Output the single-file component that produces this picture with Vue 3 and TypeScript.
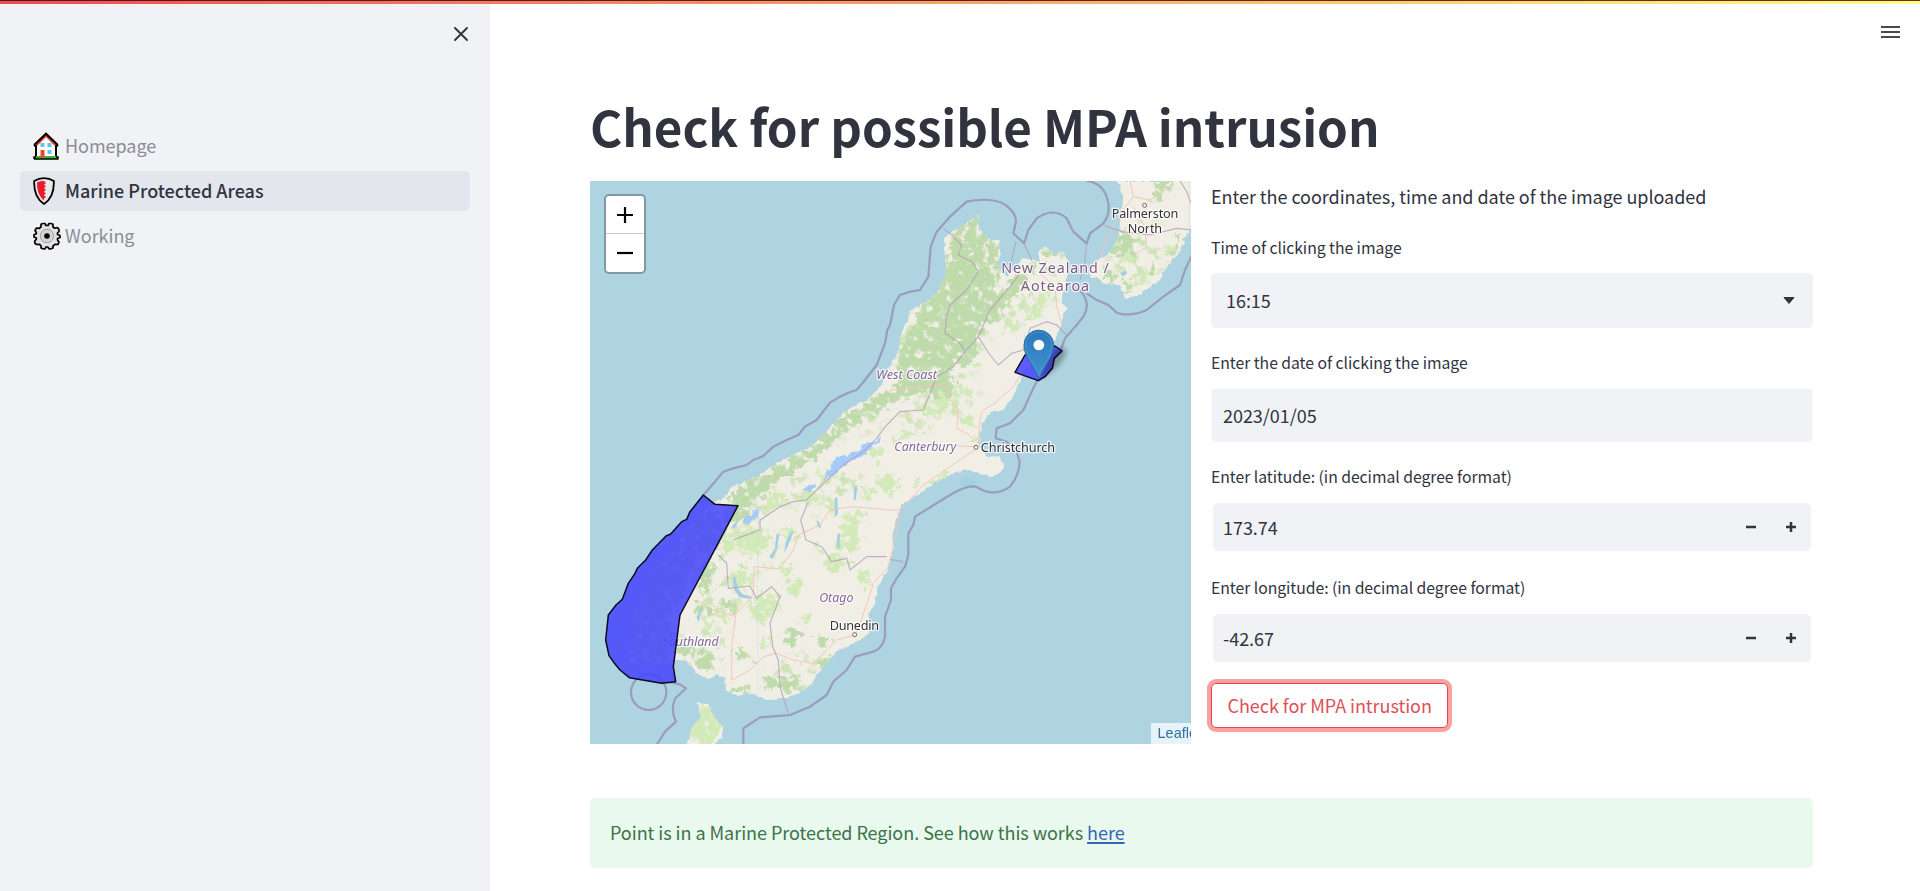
<script setup lang="ts">
import { ref } from 'vue'

interface NavItem {
  label: string
  icon: 'house' | 'shield' | 'gear'
}

const navItems: NavItem[] = [
  { label: 'Homepage', icon: 'house' },
  { label: 'Marine Protected Areas', icon: 'shield' },
  { label: 'Working', icon: 'gear' },
]
const activeNav = ref<string>('Marine Protected Areas')
const time = ref<string>('16:15')
const date = ref<string>('2023/01/05')
const latitude = ref<number>(173.74)
const longitude = ref<number>(-42.67)

const step = (value: number, delta: number): number => Number((value + delta).toFixed(2))

// Map drawing units are thirds of a pixel.
const southIsland =
  'M1168 105 L1140 122 1098 147 1062 175 1066 230 1068 280 1045 335 1010 365 985 382 957 392 955 412 935 460 926 512 900 560 872 620 830 660 770 690 740 722 700 765 660 800 600 830 560 850 500 890 440 915 425 920 410 945 380 965 320 1010 200 1170 130 1320 120 1440 160 1460 250 1440 290 1442 320 1480 350 1497 382 1482 405 1495 408 1530 440 1548 480 1540 530 1560 580 1556 620 1540 662 1518 682 1480 740 1415 800 1384 840 1358 836 1305 855 1270 862 1225 900 1150 908 1100 908 1060 920 1010 935 975 980 945 1050 900 1100 875 1140 870 1185 886 1210 888 1235 875 1242 855 1228 828 1195 832 1168 800 1168 770 1175 730 1200 700 1240 690 1270 650 1285 610 1298 580 1350 530 1395 480 1412 440 1420 405 1433 385 1415 370 1418 340 1428 300 1440 258 1420 215 1395 222 1362 198 1342 218 1352 245 1300 235 1275 262 1252 292 1225 268 1230 220 1226 180 1198 178 1175 155 1162 130 Z'
const northIsland =
  'M1580 3 L1592 24 1600 52 1595 90 1592 145 1580 182 1552 225 1520 240 1498 265 1500 290 1520 294 1545 312 1590 316 1605 356 1640 347 1700 310 1732 260 1770 212 1792 162 1806 138 1806 3 Z'
const stewartIsland =
  'M320 1570 L355 1573 372 1612 400 1640 394 1672 372 1695 293 1695 306 1642 332 1610 Z'

// [cx, cy, rx, ry, rotation]
const forests: number[][] = [
  [1130, 200, 50, 70, -10], [1160, 170, 30, 55, 0], [1110, 300, 55, 85, 8], [1180, 290, 48, 80, 10],
  [1050, 405, 75, 60, -20], [1130, 400, 60, 100, 10], [1010, 480, 70, 60, -30], [1100, 500, 65, 60, -30],
  [960, 530, 40, 80, 20], [1020, 575, 80, 45, -35], [1195, 380, 45, 50, 0], [1210, 205, 18, 28, 0],
  [1280, 320, 40, 28, -40], [1230, 370, 36, 26, -50], [960, 620, 50, 30, -35], [1060, 620, 35, 26, -30],
  [870, 670, 70, 24, -35], [780, 725, 70, 22, -35], [700, 790, 55, 20, -35], [640, 835, 60, 20, -30],
  [560, 885, 70, 24, -28], [480, 935, 65, 30, -28], [445, 1000, 45, 26, -30], [350, 1190, 20, 60, 5],
  [340, 1290, 28, 18, 0], [410, 1275, 24, 15, 10], [345, 1445, 28, 30, 0], [290, 1410, 28, 24, 0],
  [600, 1510, 36, 26, 0], [545, 1505, 24, 16, 0], [605, 1370, 16, 30, 30], [700, 1378, 20, 16, 0],
  [460, 1420, 28, 14, 30], [1600, 190, 38, 40, 15], [1560, 285, 22, 20, 0], [1720, 22, 18, 38, 35],
  [1760, 200, 8, 36, 30], [1690, 265, 8, 22, 30], [1612, 320, 12, 20, 0], [1365, 172, 12, 24, 10],
  [1380, 225, 22, 13, 0], [1310, 270, 36, 16, -30], [450, 1530, 34, 9, 0], [700, 1445, 26, 12, -40],
  [230, 1200, 60, 170, 28], [180, 1370, 70, 90, 0], [340, 1060, 50, 70, 30],
]
const meadows: number[][] = [
  [1260, 440, 28, 14, -20], [1330, 400, 26, 14, -20], [1310, 480, 20, 9, 30], [1340, 370, 34, 18, -20],
  [1060, 660, 45, 30, -20], [1010, 690, 18, 20, 0], [1130, 720, 24, 14, 30], [1115, 620, 24, 9, 0],
  [940, 770, 45, 12, -20], [1010, 750, 18, 10, 0], [855, 820, 22, 24, -40], [890, 910, 36, 28, 20],
  [700, 880, 20, 14, 0], [840, 940, 22, 16, 0], [780, 1070, 36, 50, 0], [740, 1150, 36, 24, 0],
  [660, 950, 30, 24, -20], [800, 1010, 28, 18, 0], [710, 980, 22, 14, 20], [480, 1080, 60, 38, 0],
  [560, 960, 28, 26, -30], [430, 1080, 35, 35, 0], [450, 1200, 34, 28, 0], [530, 1270, 38, 36, 0],
  [510, 1300, 36, 22, 20], [615, 1222, 22, 30, -20], [680, 1105, 16, 12, 0], [590, 1170, 20, 14, 0],
  [830, 1200, 12, 28, 0], [350, 1330, 12, 26, 0], [400, 1310, 16, 10, 0],
  [640, 1320, 12, 16, 30], [530, 1390, 12, 14, 0], [345, 1640, 50, 62, 0], [1050, 900, 42, 9, -25],
  [990, 915, 22, 7, 0], [1620, 230, 26, 18, -30], [1650, 300, 28, 16, -35], [1730, 210, 12, 26, 30],
  [1060, 480, 16, 10, 0], [1700, 55, 12, 20, 30], [1380, 340, 22, 14, 30], [1160, 780, 12, 6, 0],
  [600, 1060, 24, 18, 0], [1160, 560, 16, 10, 30], [1130, 640, 18, 10, 0],
]
// Broad, thin vegetation that only shows as scattered specks.
const scrub: number[][] = [
  [840, 710, 110, 40, -35], [540, 950, 130, 50, -35], [460, 1110, 110, 80, 0], [390, 1230, 70, 90, 0],
  [340, 1400, 80, 70, 0], [620, 1480, 100, 60, 0], [1300, 370, 110, 50, -35], [1050, 680, 130, 50, -20],
  [1400, 260, 60, 70, 0], [1060, 430, 150, 220, 20], [1650, 220, 100, 100, 0], [720, 930, 120, 60, -30],
]

const southernArea =
  '340,945 375,973 444,977 270,1305 250,1460 257,1505 215,1510 180,1504 118,1493 90,1470 72,1448 57,1427 47,1380 55,1305 78,1275 97,1258 115,1210 135,1180 142,1165 167,1140 187,1110 228,1068 242,1062 275,1025 290,1018 300,995'
const kaikouraArea =
  '1305,525 1275,577 1345,602 1365,590 1387,565 1393,535 1416,513 1395,498'
</script>

<template>
  <div class="app">
    <div class="decoration"></div>

    <aside class="sidebar">
      <button class="close" aria-label="Close sidebar">
        <svg viewBox="0 0 16 16" width="16" height="16">
          <path d="M2 2 14 14M14 2 2 14" />
        </svg>
      </button>
      <nav class="nav">
        <a
          v-for="item in navItems"
          :key="item.label"
          class="nav-item"
          :class="{ active: item.label === activeNav }"
          @click="activeNav = item.label"
        >
          <span class="nav-icon">
            <svg v-if="item.icon === 'house'" viewBox="0 0 27 28" width="27" height="28">
              <path d="M3 14V26H23V14L13 3Z" fill="#fff" />
              <path d="M2 24H24V27H2Z" fill="#3fb13f" />
              <path d="M3 24V13M23 24V13" stroke="#000" stroke-width="2" />
              <path d="M1 27V25H3M25 27V25H23M1 27H25.500" fill="none" stroke="#000" stroke-width="1.500" />
              <path d="M3.500 13 13 3.500 22.500 13" fill="none" stroke="#e8341c" stroke-width="2.200" />
              <path d="M1.700 14.500V12.500L13 1.700 24.300 12.500V14.500" fill="none" stroke="#000" stroke-width="2" />
              <path d="M7.500 11h4v4h-4zM14.500 11h4v4h-4zM14.500 18h4v4h-4z" fill="#5cc8f0" />
              <path d="M7.500 18h4v7.500h-4z" fill="#e8492c" />
            </svg>
            <svg v-else-if="item.icon === 'shield'" viewBox="0 0 27 28" width="27" height="28">
              <path d="M11 1.200C7.500 1.200 3.800 2.400 1.200 4C.8 13 2.800 21.500 11 27C19.200 21.500 21.200 13 20.800 4C18 2.200 14.500 1.200 11 1.200Z" fill="#e9e9e9" stroke="#000" stroke-width="1.800" />
              <path d="M11.500 3.800C8.500 3.800 6 4.500 4 5.500C4 13 5.500 19 11 23.500Z" fill="#ea1c2c" />
              <path d="M11.700 5V22" stroke="#ea1c2c" stroke-width="1.500" stroke-dasharray="2 1.500" />
            </svg>
            <svg v-else viewBox="0 0 28 28" width="28" height="28">
              <path d="M10 1.500H12L13 3.500H15L16 1.500H18L20 2.300V5L21.800 6.200L24.500 5.500L26 7.500V9.500L24.500 11V12.500L27 13.500V15.500L24.500 16.500V18L26 20L25 22.500L22 22.300L20 24V26L18 26.800H16L14.800 25H13L12 26.800H10L8 26V23.800L6.500 22.300L3.500 22.500L1.800 21V19L3.300 17.200V16L1 15V12.800L3.300 11.800V10.500L2 8.500L3.500 6L6.300 6.300L8 5V2.300Z" fill="#e2e2e2" stroke="#000" stroke-width="1.700" stroke-linejoin="round" />
              <circle cx="14" cy="14" r="6.700" fill="#d4d4d4" stroke="#a0a0a0" />
              <circle cx="14" cy="14" r="2.800" fill="#000" />
            </svg>
          </span>
          <span class="nav-label">{{ item.label }}</span>
        </a>
      </nav>
    </aside>

    <main class="main">
      <button class="menu" aria-label="Menu">
        <span></span><span></span><span></span>
      </button>

      <h1 class="title">Check for possible MPA intrusion</h1>

      <div class="columns">
        <section class="map">
          <svg class="tiles" viewBox="0 3 1803 1689" width="601" height="563">
            <defs>
              <clipPath id="land">
                <path :d="southIsland" />
                <path :d="northIsland" />
                <path :d="stewartIsland" />
              </clipPath>
              <filter id="rough" x="-5%" y="-5%" width="110%" height="110%">
                <feTurbulence type="fractalNoise" baseFrequency="0.045" numOctaves="4" seed="4" result="n" />
                <feDisplacementMap in="SourceGraphic" in2="n" scale="60" xChannelSelector="R" yChannelSelector="G" result="d" />
                <feColorMatrix in="n" type="matrix" values="0 0 0 0 0  0 0 0 0 0  0 0 0 0 0  0 0 6 0 -1.600" result="m" />
                <feComposite in="d" in2="m" operator="in" />
              </filter>
              <filter id="specks" x="-5%" y="-5%" width="110%" height="110%">
                <feTurbulence type="fractalNoise" baseFrequency="0.035" numOctaves="4" seed="12" result="n" />
                <feColorMatrix in="n" type="matrix" values="0 0 0 0 0  0 0 0 0 0  0 0 0 0 0  0 0 7 0 -3.700" result="m" />
                <feGaussianBlur in="SourceGraphic" stdDeviation="14" result="b" />
                <feComposite in="b" in2="m" operator="in" />
              </filter>
              <filter id="coast" x="-2%" y="-2%" width="104%" height="104%">
                <feTurbulence type="fractalNoise" baseFrequency="0.06" numOctaves="3" seed="9" result="n" />
                <feDisplacementMap in="SourceGraphic" in2="n" scale="12" xChannelSelector="R" yChannelSelector="G" />
              </filter>
              <filter id="soft" x="-50%" y="-50%" width="200%" height="200%">
                <feGaussianBlur stdDeviation="8" />
              </filter>
              <linearGradient id="pin" x1="0" y1="0" x2="0" y2="1">
                <stop offset="0" stop-color="#2a78bd" />
                <stop offset="1" stop-color="#3f94cf" />
              </linearGradient>
            </defs>

            <rect x="0" y="0" width="1803" height="1695" fill="#aed3e1" />
            <g filter="url(#coast)">
              <g clip-path="url(#land)">
                <rect x="0" y="0" width="1806" height="1695" fill="#f1eee6" />
                <g filter="url(#specks)">
                  <ellipse
                    v-for="(s, i) in scrub"
                    :key="'s' + i"
                    :cx="s[0]" :cy="s[1]" :rx="s[2]" :ry="s[3]"
                    :transform="`rotate(${s[4]} ${s[0]} ${s[1]})`"
                    fill="#cfe3b8"
                  />
                </g>
                <g filter="url(#rough)">
                  <ellipse
                    v-for="(m, i) in meadows"
                    :key="'m' + i"
                    :cx="m[0]" :cy="m[1]" :rx="m[2]" :ry="m[3]"
                    :transform="`rotate(${m[4]} ${m[0]} ${m[1]})`"
                    fill="#d2e9b8"
                  />
                  <ellipse
                    v-for="(f, i) in forests"
                    :key="'f' + i"
                    :cx="f[0]" :cy="f[1]" :rx="f[2]" :ry="f[3]"
                    :transform="`rotate(${f[4]} ${f[0]} ${f[1]})`"
                    fill="#bfdaab"
                  />
                </g>
              </g>
            </g>

            <g class="glaciers" filter="url(#coast)">
              <path d="M700 900l10-24 14-10 6-26 22-14 24 4 8-14 22-2 10-8 24-4-14 20-22 12-18 4-14 18-26 8-14 22-20 4zM812 800l18-10 26-4 20-14-4 14-22 10-10 8-24 4zM640 930l16-12 24-6-6 14-20 8zM458 1018l12-14 14 2 8-14 16-2-4 22-18 6-4 12-20 0zM430 1030l14-6-6 20-12 2z" />
            </g>
            <g class="lakes">
              <path d="M733 955l9-3 2 50-10 10zM793 920l9-5-4 42-7 6zM680 1020l10 10 4 16-12-8zM742 1062l8 0-2 46-8-4zM560 1060l8 4-8 48-14 26-8-8 16-20zM605 1050l6 4-20 50-8 14 4-32zM428 1190l8 0 8 35 14 18 30 8-6 6-34-6-16-24zM320 1313l12-30 4 4-10 40zM1590 280l16-10 6 10-14 10zM1110 908l12-18 24 8 14 10-14 6-30 6zM955 785l14 10 6 8-14-6z" />
            </g>

            <g class="roads">
              <path d="M1165 790L1168 740 1175 695 1220 665 1270 620 1295 580M1165 790L1130 760 1100 745 1105 690 1075 650 1070 610 1000 620 900 630M1165 800L1100 798M1160 805L1080 860 1000 915 930 990 922 1040 905 1120 895 1160 850 1210 835 1260 810 1330 795 1365 740 1380 670 1450 610 1440 560 1420 520 1430 480 1470 425 1500M425 1500L425 1400 438 1300 470 1270 490 1240 492 1160 540 1165 570 1165 610 1110 625 1065 690 1035 720 990 780 980 850 985 900 990 928 990M438 1310L370 1290 320 1260M1415 430L1400 380 1395 320 1350 280M1500 280L1530 230 1550 180 1590 100 1630 50 1620 3M1630 50L1680 60 1740 20M1625 230L1670 200 1665 140 1630 80" />
            </g>
            <g class="regions">
              <path d="M1060 145L1090 170 1115 195 1105 225 1145 245 1165 275 1130 330 1080 375 1070 410 1065 460 1110 490 1125 515 1090 560 1040 590 1000 690 930 695 890 735 860 775 820 815 760 855 700 910 650 960 610 965 570 980 510 1020 510 1050 450 1072 430 1080M1125 515L1165 470 1200 390 1260 320 1290 280M1165 470L1200 525 1225 555 1265 520 1300 510 1320 445 1370 425 1400 435 1430 465M655 965L632 1020 648 1080 695 1100 725 1145 770 1135 780 1170 830 1130 890 1130M385 1125L410 1150 415 1225 480 1218 500 1255 545 1220 570 1250 540 1330 548 1400 565 1440 570 1520 595 1600M378 1110L400 1060M900 1138L940 1145M1278 185L1258 270M1302 190L1325 240M1490 190L1484 250 1470 300M1540 135L1595 155 1680 165 1760 145 1806 150M1770 3L1790 35 1803 70" />
            </g>
            <g class="maritime">
              <path d="M340 945L375 905 400 875 430 865 470 855 490 840 520 828 550 800 590 780 625 765 645 740 680 720 720 668 750 650 775 638 800 630 825 600 860 555 885 490 892 450 900 435 912 375 930 345 960 335 990 330 1015 290 1022 200 1040 155 1080 110 1130 65 Q1165 57 1200 60 Q1240 65 1255 82 Q1278 100 1278 125 L1270 160 1302 190 1315 150 1340 115 Q1390 80 1430 115 L1450 155 1490 190 1500 160 1540 130 Q1560 105 1555 70 Q1545 10 1490 3" />
              <path d="M1470 330Q1505 370 1480 410L1460 435 1425 475 1412 510M1342 600L1330 625 1300 690 1260 730 1220 745 1217 775 1250 785 1280 815 1289 845Q1288 885 1260 920Q1210 955 1158 920Q1130 915 1080 945L975 1010 970 1035 955 1060 955 1125 945 1160 920 1195 903 1225 903 1260 885 1310 885 1370Q878 1405 850 1415L795 1430 770 1470 730 1505 710 1545 660 1580 600 1605 510 1612 460 1645 460 1695" />
              <path d="M1490 340L1520 360 1555 375 1580 398Q1620 412 1670 390L1720 350 1770 315 1785 270 1806 225" />
              <circle cx="176" cy="1537" r="53" />
              <path d="M232 1505L270 1513 288 1525 256 1555Q240 1590 258 1625L225 1655 200 1695" />
            </g>
            <path d="M503 3V1692M1450 3V1692M1797 3V1692" stroke="#b9d3e5" stroke-width="2" opacity=".45" />

            <g class="towns">
              <circle cx="1664" cy="76" r="6" />
              <circle cx="1158" cy="802" r="6" />
              <circle cx="794" cy="1364" r="6" />
            </g>
            <g class="city">
              <text x="1665" y="115" textLength="200">Palmerston</text>
              <text x="1665" y="160" textLength="103">North</text>
              <text x="1284" y="816" textLength="223">Christchurch</text>
              <text x="793" y="1350" textLength="148">Dunedin</text>
            </g>
            <g class="country">
              <text x="1395" y="278" textLength="323">New Zealand /</text>
              <text x="1395" y="334" textLength="205">Aotearoa</text>
            </g>
            <g class="region-name">
              <text x="950" y="598" textLength="182" lengthAdjust="spacingAndGlyphs">West Coast</text>
              <text x="1006" y="813" textLength="186" lengthAdjust="spacingAndGlyphs">Canterbury</text>
              <text x="739" y="1266" textLength="103" lengthAdjust="spacingAndGlyphs">Otago</text>
              <text x="302" y="1398" textLength="168" lengthAdjust="spacingAndGlyphs">Southland</text>
            </g>

            <polygon class="protected" :points="southernArea" />
            <polygon class="protected" :points="kaikouraArea" />

            <path d="M1350 598L1380 525Q1405 490 1430 510Q1420 560 1350 598Z" fill="#000" opacity=".3" filter="url(#soft)" />
            <path d="M1347 597C1336 560 1302 535 1302 495A44 44 0 0 1 1391 495C1391 535 1358 560 1347 597Z" fill="url(#pin)" stroke="#2e6c9f" stroke-width="3" />
            <path d="M1346.500 586C1336 556 1307 530 1307 495A39.500 39.500 0 0 1 1386 495C1386 530 1357 556 1346.500 586Z" fill="none" stroke="#6aaede" stroke-width="2.500" opacity=".5" />
            <circle cx="1346.500" cy="495" r="16" fill="#fff" />
          </svg>
          <div class="zoom-control">
            <button class="zoom-in" aria-label="Zoom in">
              <svg viewBox="0 0 16 16" width="16" height="16"><path d="M0 8H16M8 0V16" /></svg>
            </button>
            <button class="zoom-out" aria-label="Zoom out">
              <svg viewBox="0 0 16 16" width="16" height="16"><path d="M0 8H16" /></svg>
            </button>
          </div>
          <div class="attribution">Leaflet</div>
        </section>

        <section class="form">
          <p class="intro">Enter the coordinates, time and date of the image uploaded</p>

          <div class="field">
            <label>Time of clicking the image</label>
            <div class="control select">
              <span>{{ time }}</span>
              <svg viewBox="0 0 12 7" width="12" height="7"><path d="M1 .5H11L6 6.500Z" /></svg>
            </div>
          </div>

          <div class="field">
            <label>Enter the date of clicking the image</label>
            <div class="control date"><span>{{ date }}</span></div>
          </div>

          <div class="field number-field">
            <label>Enter latitude: (in decimal degree format)</label>
            <div class="control number">
              <span class="value">{{ latitude }}</span>
              <button aria-label="Decrease" @click="latitude = step(latitude, -0.01)">
                <svg viewBox="0 0 10 10" width="10" height="10"><path d="M0 5H10" /></svg>
              </button>
              <button aria-label="Increase" @click="latitude = step(latitude, 0.01)">
                <svg viewBox="0 0 10 10" width="10" height="10"><path d="M0 5H10M5 0V10" /></svg>
              </button>
            </div>
          </div>

          <div class="field number-field">
            <label>Enter longitude: (in decimal degree format)</label>
            <div class="control number">
              <span class="value">{{ longitude }}</span>
              <button aria-label="Decrease" @click="longitude = step(longitude, -0.01)">
                <svg viewBox="0 0 10 10" width="10" height="10"><path d="M0 5H10" /></svg>
              </button>
              <button aria-label="Increase" @click="longitude = step(longitude, 0.01)">
                <svg viewBox="0 0 10 10" width="10" height="10"><path d="M0 5H10M5 0V10" /></svg>
              </button>
            </div>
          </div>

          <button class="submit">Check for MPA intrustion</button>
        </section>
      </div>

      <div class="alert">Point is in a Marine Protected Region. See how this works <a>here</a></div>
    </main>
  </div>
</template>

<style>
body {
  margin: 0;
  overflow: hidden;
}
</style>

<style scoped>
.app {
  position: relative;
  display: flex;
  width: 1920px;
  height: 891px;
  overflow: hidden;
  background: #fff;
  color: #31333f;
  font-family: 'Noto Sans CJK SC', 'Noto Sans', sans-serif;
  font-size: 18px;
  line-height: 32px;
  letter-spacing: -0.04px;
}
.app * {
  box-sizing: border-box;
}
button {
  padding: 0;
  border: 0;
  background: none;
  font: inherit;
  letter-spacing: inherit;
  color: inherit;
  cursor: pointer;
}
.decoration {
  position: absolute;
  inset: 0 0 auto;
  z-index: 2;
  height: 4px;
  border-top: 1px solid rgba(60, 0, 15, 0.8);
  background: linear-gradient(90deg, #ea4f50, #fffd80) border-box;
}

/* Sidebar */
.sidebar {
  flex: none;
  width: 490px;
  padding: 26px 20px 0;
  background: #f0f2f6;
}
.close {
  display: flex;
  margin-left: auto;
  margin-right: 1px;
}
.close path {
  stroke: #31333f;
  stroke-width: 1.9;
  stroke-linecap: round;
}
.nav {
  display: grid;
  gap: 5px;
  margin-top: 84px;
}
.nav-item {
  display: flex;
  align-items: center;
  height: 40px;
  padding-left: 12.5px;
  border-radius: 5px;
  color: #8b8d96;
  cursor: pointer;
}
.nav-item.active {
  background: #e3e7ed;
  color: #31333f;
  font-weight: 500;
  letter-spacing: 0;
}
.nav-icon {
  display: flex;
  width: 32.5px;
}
.nav-label {
  padding-bottom: 2px;
}

/* Main */
.main {
  position: relative;
  flex: 1;
  padding: 93px 107px 0 100px;
}
.menu {
  position: absolute;
  top: 26px;
  right: 20px;
  display: grid;
  gap: 3px;
  width: 19px;
}
.menu span {
  height: 2px;
  background: #484953;
}
.title {
  margin: 0 0 22px;
  font-size: 49.3px;
  font-weight: 700;
  line-height: 66px;
  letter-spacing: -0.05px;
  white-space: nowrap;
}
.columns {
  display: grid;
  grid-template-columns: 601px 602px;
  gap: 20px;
  height: 563px;
}

/* Map */
.map {
  position: relative;
  height: 563px;
  overflow: hidden;
  letter-spacing: 0;
}
.tiles {
  display: block;
}
.tiles text {
  font-family: 'Noto Sans', sans-serif;
  text-anchor: middle;
  paint-order: stroke;
  stroke: rgba(255, 255, 255, 0.75);
  stroke-width: 8px;
  stroke-linejoin: round;
}
.city text {
  font-size: 38px;
  fill: #333;
}
.country text {
  font-size: 43px;
  fill: #7d5b85;
}
.region-name text {
  font-size: 37px;
  font-style: italic;
  fill: #88669a;
}
.towns circle {
  fill: #fff;
  stroke: #666;
  stroke-width: 3;
}
.lakes path {
  fill: #a3cfe2;
}
.glaciers path {
  fill: #a5cbfa;
}
.roads path {
  fill: none;
  stroke: #f2c6bd;
  stroke-width: 3;
  stroke-linejoin: round;
}
.regions path {
  fill: none;
  stroke: #b4a0b8;
  stroke-width: 3.5;
  stroke-linejoin: round;
  opacity: 0.8;
}
.maritime path,
.maritime circle {
  fill: none;
  stroke: #9a9cbb;
  stroke-width: 6.5;
  stroke-linejoin: round;
}
.protected {
  fill: #4545fc;
  fill-opacity: 0.86;
  stroke: #0a0a20;
  stroke-width: 4.5;
  stroke-linejoin: round;
}
.zoom-control {
  position: absolute;
  top: 13px;
  left: 13.5px;
  width: 42px;
  border: 2px solid rgba(0, 0, 0, 0.27);
  border-radius: 5px;
  background: #fff;
  background-clip: padding-box;
}
.zoom-control button {
  display: flex;
  align-items: center;
  justify-content: center;
  width: 100%;
  height: 38px;
}
.zoom-control .zoom-in {
  border-bottom: 1px solid #ccc;
}
.zoom-control path {
  stroke: #000;
  stroke-width: 2.2;
}
.attribution {
  position: absolute;
  right: -19px;
  bottom: 0;
  width: 59px;
  height: 21px;
  padding-left: 6.5px;
  background: rgba(255, 255, 255, 0.72);
  color: #2f73a0;
  font: 14.5px/20px 'Liberation Sans', Arial, sans-serif;
}

/* Form */
.intro {
  height: 32px;
  margin: -1px 0 24px;
}
.field {
  margin-bottom: 23px;
}
.field label {
  display: block;
  height: 24px;
  margin-bottom: 13px;
  font-size: 15.75px;
  line-height: 24px;
}
.control {
  display: flex;
  align-items: center;
  border-radius: 5px;
  background: #f0f2f6;
}
.select {
  justify-content: space-between;
  height: 55px;
  padding: 0 18px 0 15px;
}
.select span {
  padding-bottom: 2px;
}
.select path {
  fill: #31333f;
  stroke: #31333f;
  stroke-linejoin: round;
}
.date {
  height: 54px;
  padding-left: 11px;
  border: 1px solid #f7f8fa;
}
.number-field {
  margin-bottom: 25px;
}
.number-field label {
  margin-bottom: 14px;
}
.number {
  height: 48px;
  margin: 0 2px;
  padding-left: 10px;
}
.number .value {
  flex: 1;
  padding-bottom: 1px;
}
.number button {
  display: flex;
  align-items: center;
  justify-content: center;
  width: 40px;
  height: 48px;
}
.number path {
  stroke: #31333f;
  stroke-width: 2.5;
}
.submit {
  display: block;
  height: 45px;
  margin-top: -4px;
  padding: 0 15.5px;
  border: 1px solid #dc4a50;
  border-radius: 5px;
  background: #fff;
  box-shadow: 0 0 0 4px #f9a2a2;
  color: #dd4f57;
  line-height: 41px;
  white-space: nowrap;
}

.alert {
  height: 70px;
  margin-top: 54px;
  padding: 18px 20px;
  border-radius: 5px;
  background: #e9f9ee;
  color: #3c7347;
}
.alert a {
  color: #3565b5;
  text-decoration: underline;
  text-decoration-thickness: 2px;
  text-underline-offset: 2px;
}
</style>
